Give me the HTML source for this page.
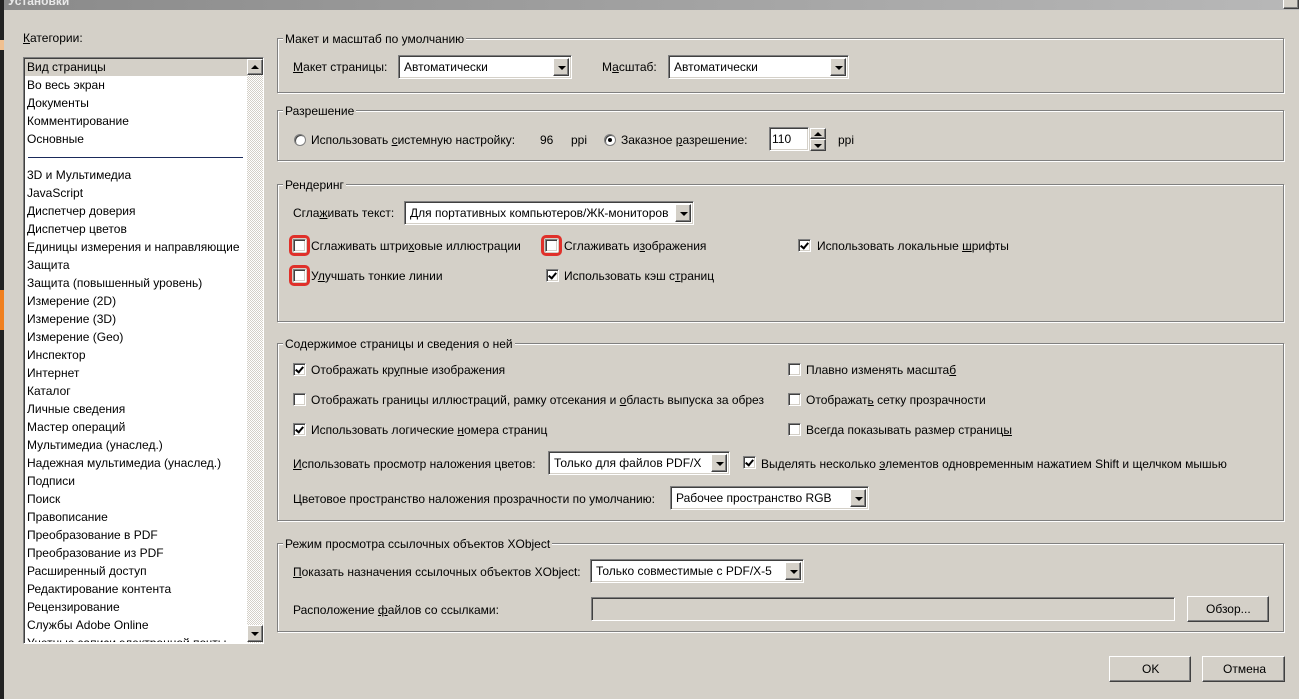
<!DOCTYPE html>
<html><head><meta charset="utf-8"><style>
*{box-sizing:border-box;margin:0;padding:0}
body{width:1299px;height:699px;background:#d4d0c8;font-family:"Liberation Sans","DejaVu Sans",sans-serif;font-size:12px;color:#000;position:relative;overflow:hidden}
.a{position:absolute;white-space:nowrap}
.t{position:absolute;white-space:nowrap;line-height:14px}
.g{position:absolute;border:1px solid #808080;box-shadow:1px 1px 0 #fff, inset 1px 1px 0 #fff}
.gt{position:absolute;background:#d4d0c8;padding:0 2px;line-height:14px;white-space:nowrap}
.cb{position:absolute;background:#fff;border-top:1px solid #808080;border-left:1px solid #808080;border-right:1px solid #fff;border-bottom:1px solid #fff;box-shadow:inset 1px 1px 0 #404040,inset -1px -1px 0 #d4d0c8}
.cb .v{position:absolute;left:5px;top:4px;line-height:14px;white-space:nowrap}
.btn{position:absolute;background:#d4d0c8;border-top:1px solid #fff;border-left:1px solid #fff;border-right:1px solid #404040;border-bottom:1px solid #404040;box-shadow:inset -1px -1px 0 #808080}
.arr{position:absolute;right:2px;top:2px;bottom:2px;width:16px}
.arr:after{content:"";position:absolute;left:4px;top:7px;border-left:4px solid transparent;border-right:4px solid transparent;border-top:4px solid #000}
.ck{position:absolute;width:13px;height:13px;background:#fff;border-top:1px solid #808080;border-left:1px solid #808080;border-right:1px solid #fff;border-bottom:1px solid #fff;box-shadow:inset 1px 1px 0 #404040,inset -1px -1px 0 #d4d0c8}
.ck.on:after{content:"";position:absolute;left:3px;top:1px;width:3px;height:6px;border-right:2px solid #000;border-bottom:2px solid #000;transform:rotate(40deg)}
.red{position:absolute;width:21px;height:21px;border:3px solid #e0302a;border-radius:5px}
.rd{position:absolute;width:12px;height:12px;border-radius:50%;background:#fff;border:1px solid #808080;box-shadow:inset 1px 1px 0 #404040}
u{text-decoration:underline}
.li{position:absolute;left:27px;line-height:18px;white-space:nowrap}
</style></head><body>
<div class="a" style="left:0;top:0;width:1299px;height:10px;background:linear-gradient(90deg,#8a8a8a,#b8b8b8)"></div>
<div class="a" style="left:8px;top:-6px;color:#e8e8e8;font-weight:bold;font-size:12px">Установки</div>
<div class="btn" style="left:1283px;top:-6px;width:16px;height:15px"></div>
<div class="a" style="left:0;top:0;width:4px;height:699px;background:#222"></div>
<div class="a" style="left:0;top:290px;width:4px;height:40px;background:#f08020"></div>
<div class="a" style="left:0;top:40px;width:4px;height:10px;background:#f0c090"></div>

<div class="t" style="left:23px;top:31px"><u>К</u>атегории:</div>
<div class="a" style="left:23px;top:57px;width:241px;height:587px;background:#fff;border-top:1px solid #808080;border-left:1px solid #808080;border-right:1px solid #fff;border-bottom:1px solid #fff;box-shadow:inset 1px 1px 0 #404040;overflow:hidden">
<div class="a" style="left:1px;top:1px;width:222px;height:17px;background:#d4d0c8"></div>
<div class="a" style="left:223px;top:1px;width:16px;height:584px;background:repeating-conic-gradient(#fff 0 25%,#d4d0c8 0 50%) 0 0/2px 2px"></div>
<div class="btn" style="left:223px;top:1px;width:16px;height:16px"></div>
<div class="a" style="left:227px;top:7px;border-left:4px solid transparent;border-right:4px solid transparent;border-bottom:4px solid #000"></div>
<div class="btn" style="left:223px;top:567px;width:16px;height:17px"></div>
<div class="a" style="left:227px;top:574px;border-left:4px solid transparent;border-right:4px solid transparent;border-top:4px solid #000"></div>
<div class="a" style="left:4px;top:99px;width:215px;height:1px;background:#1a2a5a"></div>
</div>
<div class="li" style="top:58px">Вид страницы</div>
<div class="li" style="top:76px">Во весь экран</div>
<div class="li" style="top:94px">Документы</div>
<div class="li" style="top:112px">Комментирование</div>
<div class="li" style="top:130px">Основные</div>
<div class="li" style="top:166px">3D и Мультимедиа</div>
<div class="li" style="top:184px">JavaScript</div>
<div class="li" style="top:202px">Диспетчер доверия</div>
<div class="li" style="top:220px">Диспетчер цветов</div>
<div class="li" style="top:238px">Единицы измерения и направляющие</div>
<div class="li" style="top:256px">Защита</div>
<div class="li" style="top:274px">Защита (повышенный уровень)</div>
<div class="li" style="top:292px">Измерение (2D)</div>
<div class="li" style="top:310px">Измерение (3D)</div>
<div class="li" style="top:328px">Измерение (Geo)</div>
<div class="li" style="top:346px">Инспектор</div>
<div class="li" style="top:364px">Интернет</div>
<div class="li" style="top:382px">Каталог</div>
<div class="li" style="top:400px">Личные сведения</div>
<div class="li" style="top:418px">Мастер операций</div>
<div class="li" style="top:436px">Мультимедиа (унаслед.)</div>
<div class="li" style="top:454px">Надежная мультимедиа (унаслед.)</div>
<div class="li" style="top:472px">Подписи</div>
<div class="li" style="top:490px">Поиск</div>
<div class="li" style="top:508px">Правописание</div>
<div class="li" style="top:526px">Преобразование в PDF</div>
<div class="li" style="top:544px">Преобразование из PDF</div>
<div class="li" style="top:562px">Расширенный доступ</div>
<div class="li" style="top:580px">Редактирование контента</div>
<div class="li" style="top:598px">Рецензирование</div>
<div class="li" style="top:616px">Службы Adobe Online</div>
<div class="a" style="left:27px;top:634px;width:220px;height:8px;overflow:hidden"><div style="line-height:18px">Учетные записи электронной почты</div></div>

<div class="g" style="left:277px;top:38px;width:1007px;height:55px"></div>
<div class="gt" style="left:283px;top:32px">Макет и масштаб по умолчанию</div>
<div class="t" style="left:293px;top:60px"><u>М</u>акет страницы:</div>
<div class="cb" style="left:398px;top:55px;width:174px;height:24px"><div class="v">Автоматически</div><div class="btn arr"></div></div>
<div class="t" style="left:602px;top:60px">М<u>а</u>сштаб:</div>
<div class="cb" style="left:668px;top:55px;width:181px;height:24px"><div class="v">Автоматически</div><div class="btn arr"></div></div>

<div class="g" style="left:277px;top:110px;width:1007px;height:51px"></div>
<div class="gt" style="left:283px;top:104px">Разрешение</div>
<div class="rd" style="left:294px;top:134px"></div>
<div class="t" style="left:311px;top:133px">Использовать <u>с</u>истемную настройку:</div>
<div class="t" style="left:540px;top:133px">96</div>
<div class="t" style="left:571px;top:133px">ppi</div>
<div class="rd" style="left:604px;top:134px"></div>
<div class="a" style="left:608px;top:138px;width:4px;height:4px;background:#000;border-radius:50%"></div>
<div class="t" style="left:621px;top:133px">Заказное <u>р</u>азрешение:</div>
<div class="cb" style="left:769px;top:127px;width:40px;height:24px"><div class="v" style="left:2px;color:#000">110</div></div>
<div class="btn" style="left:810px;top:128px;width:16px;height:11px"></div>
<div class="a" style="left:814px;top:132px;border-left:4px solid transparent;border-right:4px solid transparent;border-bottom:4px solid #000"></div>
<div class="btn" style="left:810px;top:139px;width:16px;height:12px"></div>
<div class="a" style="left:814px;top:144px;border-left:4px solid transparent;border-right:4px solid transparent;border-top:4px solid #000"></div>
<div class="t" style="left:838px;top:133px">ppi</div>

<div class="g" style="left:277px;top:184px;width:1007px;height:138px"></div>
<div class="gt" style="left:283px;top:178px">Рендеринг</div>
<div class="t" style="left:293px;top:206px">Сгла<u>ж</u>ивать текст:</div>
<div class="cb" style="left:404px;top:201px;width:290px;height:24px"><div class="v">Для портативных компьютеров/ЖК-мониторов</div><div class="btn arr"></div></div>
<div class="red" style="left:289px;top:235px"></div>
<div class="ck" style="left:293px;top:239px"></div>
<div class="t" style="left:311px;top:239px">Сглаживать штри<u>х</u>овые иллюстрации</div>
<div class="red" style="left:541px;top:235px"></div>
<div class="ck" style="left:545px;top:239px"></div>
<div class="t" style="left:564px;top:239px">Сглаживать и<u>з</u>ображения</div>
<div class="ck on" style="left:798px;top:239px"></div>
<div class="t" style="left:817px;top:239px">Использовать локальные <u>ш</u>рифты</div>
<div class="red" style="left:289px;top:265px"></div>
<div class="ck" style="left:293px;top:269px"></div>
<div class="t" style="left:311px;top:269px">У<u>л</u>учшать тонкие линии</div>
<div class="ck on" style="left:546px;top:269px"></div>
<div class="t" style="left:564px;top:269px">Использовать кэш с<u>т</u>раниц</div>

<div class="g" style="left:277px;top:343px;width:1007px;height:178px"></div>
<div class="gt" style="left:283px;top:337px">Содержимое страницы и сведения о ней</div>
<div class="ck on" style="left:293px;top:363px"></div>
<div class="t" style="left:311px;top:363px">Отображать кр<u>у</u>пные изображения</div>
<div class="ck" style="left:788px;top:363px"></div>
<div class="t" style="left:806px;top:363px">Плавно изменять масшта<u>б</u></div>
<div class="ck" style="left:293px;top:393px"></div>
<div class="t" style="left:311px;top:393px">Отображать границы иллюстраций, рамку отсекания и <u>о</u>бласть выпуска за обрез</div>
<div class="ck" style="left:788px;top:393px"></div>
<div class="t" style="left:806px;top:393px">Отображат<u>ь</u> сетку прозрачности</div>
<div class="ck on" style="left:293px;top:423px"></div>
<div class="t" style="left:311px;top:423px">Использовать логические <u>н</u>омера страниц</div>
<div class="ck" style="left:788px;top:423px"></div>
<div class="t" style="left:806px;top:423px">Всегда показывать размер страниц<u>ы</u></div>
<div class="t" style="left:293px;top:457px"><u>И</u>спользовать просмотр наложения цветов:</div>
<div class="cb" style="left:548px;top:451px;width:182px;height:24px"><div class="v">Только для файлов PDF/X</div><div class="btn arr"></div></div>
<div class="ck on" style="left:743px;top:456px"></div>
<div class="t" style="left:761px;top:457px">Выделять несколько <u>э</u>лементов одновременным нажатием Shift и щелчком мышью</div>
<div class="t" style="left:293px;top:492px">Цветовое пространство наложения прозрачности по умолчанию:</div>
<div class="cb" style="left:670px;top:486px;width:199px;height:24px"><div class="v">Рабочее пространство RGB</div><div class="btn arr"></div></div>

<div class="g" style="left:277px;top:543px;width:1007px;height:89px"></div>
<div class="gt" style="left:283px;top:537px">Режим просмотра ссылочных объектов XObject</div>
<div class="t" style="left:293px;top:565px"><u>П</u>оказать назначения ссылочных объектов XObject:</div>
<div class="cb" style="left:590px;top:559px;width:214px;height:24px"><div class="v">Только совместимые с PDF/X-5</div><div class="btn arr"></div></div>
<div class="t" style="left:293px;top:603px">Расположение <u>ф</u>айлов со ссылками:</div>
<div class="a" style="left:591px;top:597px;width:584px;height:24px;border-top:1px solid #808080;border-left:1px solid #808080;border-right:1px solid #fff;border-bottom:1px solid #fff;box-shadow:inset 1px 1px 0 #404040"></div>
<div class="btn" style="left:1187px;top:596px;width:82px;height:26px"></div>
<div class="t" style="left:1206px;top:602px">Обзор...</div>

<div class="btn" style="left:1109px;top:656px;width:82px;height:26px"></div>
<div class="t" style="left:1142px;top:662px">OK</div>
<div class="btn" style="left:1202px;top:656px;width:83px;height:26px"></div>
<div class="t" style="left:1223px;top:662px">Отмена</div>
</body></html>
